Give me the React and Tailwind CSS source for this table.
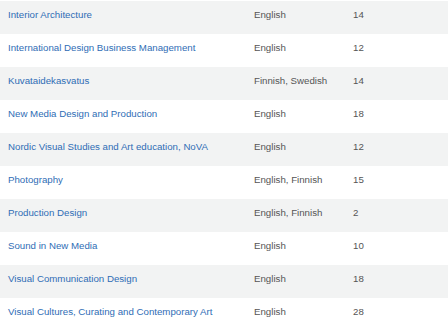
import React from "react";

const rows = [
  ["Interior Architecture", "English", "14"],
  ["International Design Business Management", "English", "12"],
  ["Kuvataidekasvatus", "Finnish, Swedish", "14"],
  ["New Media Design and Production", "English", "18"],
  ["Nordic Visual Studies and Art education, NoVA", "English", "12"],
  ["Photography", "English, Finnish", "15"],
  ["Production Design", "English, Finnish", "2"],
  ["Sound in New Media", "English", "10"],
  ["Visual Communication Design", "English", "18"],
  ["Visual Cultures, Curating and Contemporary Art", "English", "28"],
];

export default function App() {
  return (
    <div className="w-[448px] h-[333px] overflow-hidden bg-white pt-[1px]" style={{ fontFamily: '"Liberation Sans", Arial, sans-serif' }}>
      {rows.map((r, i) => (
        <div
          key={i}
          className={`flex items-center h-[33px] pb-[4px] text-[9.7px] ${i % 2 === 0 ? "bg-[#f2f3f3]" : "bg-white"}`}
        >
          <div className="w-[254px] pl-[8px] text-[#2f6db5]">{r[0]}</div>
          <div className="w-[99px] text-[#555555]">{r[1]}</div>
          <div className="text-[#555555]">{r[2]}</div>
        </div>
      ))}
    </div>
  );
}
